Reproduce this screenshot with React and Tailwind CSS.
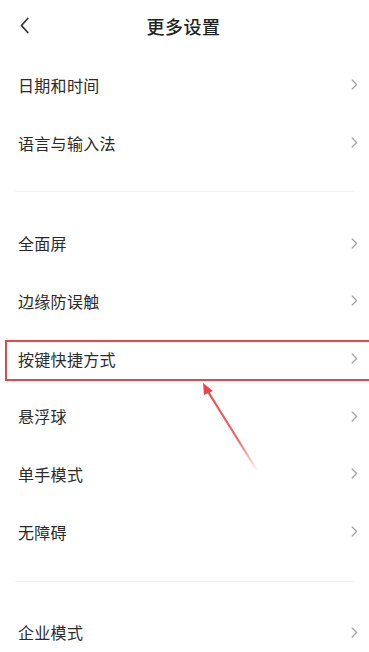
import React from 'react'

const font = { fontFamily: '"Noto Sans CJK SC", "Noto Sans", sans-serif' }

function Chevron() {
  return (
    <svg width="7" height="11" viewBox="0 0 7 11" fill="none" className="shrink-0">
      <path d="M1.2 1 L5.6 5.5 L1.2 10" stroke="#a3a3a3" strokeWidth="1.2" strokeLinecap="round" strokeLinejoin="round" />
    </svg>
  )
}

function Row({ label, highlight }) {
  return (
    <div className="relative flex items-center justify-between h-[57.7px] pl-[18px] pr-[11px]">
      <span className="text-[16px] text-[#2b2b2b] tracking-[0.3px]">{label}</span>
      <Chevron />
      {highlight && (
        <div className="absolute left-[5px] right-[-4px] top-[10px] bottom-[6px] border-2 border-[#e8464a] pointer-events-none" />
      )}
    </div>
  )
}

function Divider() {
  return <div className="mx-[15px] h-px bg-[#f2f2f2]" />
}

export default function App() {
  return (
    <div className="relative w-[369px] h-[652px] bg-white overflow-hidden" style={font}>
      {/* Header */}
      <div className="relative flex items-center justify-center h-[53px]">
        <svg width="11" height="18" viewBox="0 0 11 18" fill="none" className="absolute left-[19px] top-[17px]">
          <path d="M8.8 1.5 L2.5 8.5 L8.8 15.5" stroke="#333" strokeWidth="1.7" strokeLinecap="round" strokeLinejoin="round" />
        </svg>
        <span className="text-[18px] font-medium text-[#222] tracking-[0.5px] pr-[2px]">更多设置</span>
      </div>

      <div className="pt-[3px]">
        <Row label="日期和时间" />
        <Row label="语言与输入法" />
      </div>
      <div className="pt-[20px] pb-[22px]">
        <Divider />
      </div>
      <div>
        <Row label="全面屏" />
        <Row label="边缘防误触" />
        <Row label="按键快捷方式" highlight />
        <Row label="悬浮球" />
        <Row label="单手模式" />
        <Row label="无障碍" />
      </div>
      <div className="pt-[20px] pb-[22px]">
        <Divider />
      </div>
      <div>
        <Row label="企业模式" />
      </div>

      {/* annotation arrow */}
      <svg className="absolute left-0 top-0 pointer-events-none" width="369" height="652" viewBox="0 0 369 652">
        <defs>
          <linearGradient id="fade" x1="258" y1="472" x2="203" y2="383" gradientUnits="userSpaceOnUse">
            <stop offset="0" stopColor="#e8464a" stopOpacity="0" />
            <stop offset="0.35" stopColor="#e8464a" stopOpacity="0.8" />
            <stop offset="1" stopColor="#e8464a" stopOpacity="1" />
          </linearGradient>
        </defs>
        <line x1="258" y1="472" x2="207" y2="390" stroke="url(#fade)" strokeWidth="2.2" strokeLinecap="round" />
        <polygon points="203,383 213,391 204,395" fill="#e8464a" />
      </svg>
    </div>
  )
}
